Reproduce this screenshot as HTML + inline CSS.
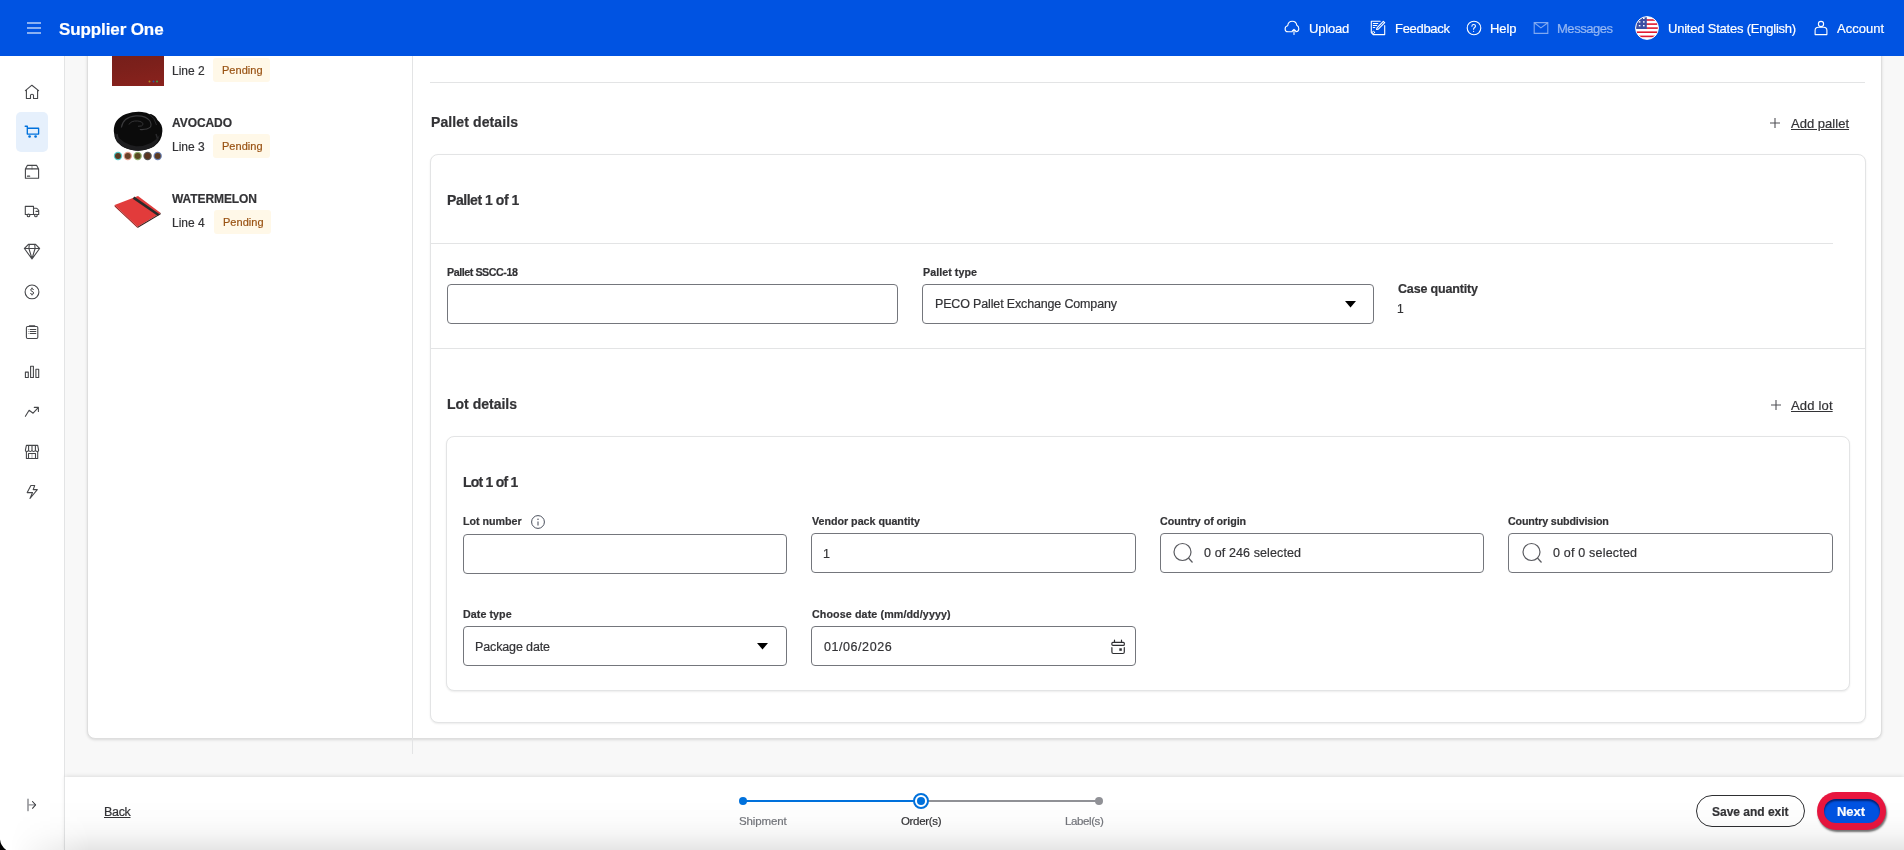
<!DOCTYPE html>
<html><head><meta charset="utf-8">
<style>
*{box-sizing:border-box;margin:0;padding:0}
html,body{width:1904px;height:850px;overflow:hidden;background:#f8f8f8;font-family:"Liberation Sans",sans-serif;color:#2e2f32;position:relative}
.abs{position:absolute}
.t{position:absolute;white-space:nowrap;line-height:1;-webkit-text-stroke:0.2px currentColor;will-change:transform}
svg{position:absolute;overflow:visible}

</style></head>
<body>
<div class="abs " style="left:87px;top:20px;width:1795px;height:719px;background:#fff;border:1px solid #dedede;border-radius:8px;box-shadow:0 1px 3px rgba(0,0,0,.13);"></div>
<div class="abs " style="left:412px;top:56px;width:1px;height:698px;background:#e3e4e5;"></div>
<div class="abs " style="left:112px;top:34px;width:52px;height:52px;background:linear-gradient(170deg,#6e1d19,#7c201b 60%,#8a221d);"></div>
<svg style="left:148px;top:80px" width="12" height="3"><circle cx="1.5" cy="1.5" r="1" fill="#b08a20"/><circle cx="5.5" cy="1.5" r="1" fill="#3050a0"/><circle cx="9" cy="1.5" r="1" fill="#40a040"/></svg>
<div class="t" style="left:172.00px;top:64.64px;font-size:12px;color:#333336;">Line 2</div>
<div class="abs " style="left:213px;top:58px;width:57px;height:24px;background:#fff8e8;border-radius:3px;"></div>
<div class="t" style="left:221.70px;top:64.89px;font-size:11px;color:#995213;letter-spacing:0.038px;">Pending</div>
<svg style="left:112px;top:110px" width="52" height="52" viewBox="0 0 52 52">
<path d="M1.8 21 Q1.5 9 14 4 Q22 1.3 30 2 Q35 2.5 37.6 4.3 L39 3.9 Q44 6 45.5 10 Q50.5 14 50.4 21 Q50 31 42 36.5 Q34 41 25 40.6 Q12 40 5 32 Q1.8 27 1.8 21Z" fill="#0b0b0b"/>
<path d="M3 23 Q10 34 24 36.2 Q40 36.5 47.5 25 Q47 33 40 37.5 Q31 41.5 22 40.5 Q9 38.5 3.5 29Z" fill="#1d1d1f"/>
<path d="M9.4 17.5 Q11 7 24 5.9 Q34 5.5 37.8 10.8 Q40 15 38.3 17.2 Q35 20 27.8 19.5" fill="none" stroke="#3a3a3c" stroke-width="1.1"/>
<path d="M17 14.5 Q19 10.5 25.6 11 Q31 11.5 31 14.5 Q30.5 16.5 26 16.3" fill="none" stroke="#343436" stroke-width="1"/>
<path d="M37.6 4.3 Q43 8 44.5 15" fill="none" stroke="#2a2a2c" stroke-width="1"/>
<path d="M5 24 L6 29 M44 24 L45.5 28.5" stroke="#2a2a2c" stroke-width="1.4"/>
<circle cx="6" cy="46" r="4.2" fill="#58c8c8"/><circle cx="6" cy="46" r="3" fill="#5a3a22"/>
<circle cx="15.8" cy="46" r="4.2" fill="#e0a090"/><circle cx="15.8" cy="46" r="3" fill="#6a4028"/>
<circle cx="25.7" cy="46" r="4.2" fill="#90b070"/><circle cx="25.7" cy="46" r="3" fill="#5a4a22"/>
<circle cx="35.6" cy="46" r="4.2" fill="#555"/><circle cx="35.6" cy="46" r="3" fill="#5a3520"/>
<circle cx="45.7" cy="46" r="4.2" fill="#6a80b0"/><circle cx="45.7" cy="46" r="3" fill="#5a3a22"/>
</svg>
<div class="t" style="left:172.00px;top:117.14px;font-size:12px;font-weight:bold;color:#333336;letter-spacing:-0.074px;">AVOCADO</div>
<div class="t" style="left:172.00px;top:140.54px;font-size:12px;color:#333336;">Line 3</div>
<div class="abs " style="left:213px;top:134px;width:57px;height:24px;background:#fff8e8;border-radius:3px;"></div>
<div class="t" style="left:221.70px;top:140.89px;font-size:11px;color:#995213;letter-spacing:0.038px;">Pending</div>
<svg style="left:112px;top:186px" width="52" height="52" viewBox="0 0 52 52">
<path d="M2.6 19 L26 10 L48.7 27 L25.6 40.8 Z" fill="#e23b3b"/>
<path d="M2.6 19 L25.6 40.8 L25.6 42 L2.6 20.5 Z" fill="#9a1e1a"/>
<path d="M25.6 40.8 L48.7 27 L48.7 28.2 L25.6 42Z" fill="#3a1a18"/>
<path d="M21.5 11.6 L46.6 29" stroke="#2a2a2a" stroke-width="2.6"/>
</svg>
<div class="t" style="left:172.00px;top:193.24px;font-size:12px;font-weight:bold;color:#333336;letter-spacing:-0.086px;">WATERMELON</div>
<div class="t" style="left:172.00px;top:216.54px;font-size:12px;color:#333336;">Line 4</div>
<div class="abs " style="left:214px;top:210px;width:57px;height:24px;background:#fff8e8;border-radius:3px;"></div>
<div class="t" style="left:222.60px;top:216.89px;font-size:11px;color:#995213;letter-spacing:0.038px;">Pending</div>
<div class="abs " style="left:430px;top:82px;width:1435px;height:1px;background:#e3e4e5;"></div>
<div class="t" style="left:431.00px;top:114.95px;font-size:14px;font-weight:bold;color:#333336;letter-spacing:0.108px;">Pallet details</div>
<svg style="left:1770px;top:118px" width="10" height="10" viewBox="0 0 10 10"><path d="M5 0V10M0 5H10" stroke="#505156" stroke-width="1.1"/></svg>
<div class="t" style="left:1790.50px;top:116.50px;font-size:13px;color:#333336;letter-spacing:0.020px;text-decoration:underline;text-underline-offset:1px;">Add pallet</div>
<div class="abs " style="left:430px;top:154px;width:1436px;height:569px;background:#fff;border:1px solid #e3e4e5;border-radius:8px;box-shadow:0 1px 2px rgba(0,0,0,.08);"></div>
<div class="t" style="left:447.00px;top:193.05px;font-size:14px;font-weight:bold;color:#333336;letter-spacing:-0.451px;">Pallet 1 of 1</div>
<div class="abs " style="left:431px;top:243px;width:1402px;height:1px;background:#e3e4e5;"></div>
<div class="t" style="left:447.00px;top:266.94px;font-size:10.7px;font-weight:bold;color:#333336;letter-spacing:-0.440px;">Pallet SSCC-18</div>
<div class="abs " style="left:447px;top:284px;width:451px;height:40px;border:1px solid #74767c;border-radius:4px;background:#fff;"></div>
<div class="t" style="left:922.80px;top:266.94px;font-size:10.7px;font-weight:bold;color:#333336;letter-spacing:0.048px;">Pallet type</div>
<div class="abs " style="left:922px;top:284px;width:452px;height:40px;border:1px solid #74767c;border-radius:4px;background:#fff;"></div>
<div class="t" style="left:935.00px;top:298.42px;font-size:12.5px;color:#333336;letter-spacing:-0.156px;">PECO Pallet Exchange Company</div>
<svg style="left:1344.5px;top:300.5px" width="11" height="6.5" viewBox="0 0 11 6.5"><path d="M0 0H11L5.5 6.5Z" fill="#000"/></svg>
<div class="t" style="left:1397.70px;top:283.22px;font-size:12.5px;font-weight:bold;color:#333336;letter-spacing:-0.164px;">Case quantity</div>
<div class="t" style="left:1397.00px;top:302.54px;font-size:12px;color:#333336;">1</div>
<div class="abs " style="left:431px;top:348px;width:1434px;height:1px;background:#e3e4e5;"></div>
<div class="t" style="left:447.00px;top:397.15px;font-size:14px;font-weight:bold;color:#333336;letter-spacing:-0.001px;">Lot details</div>
<svg style="left:1771px;top:400px" width="10" height="10" viewBox="0 0 10 10"><path d="M5 0V10M0 5H10" stroke="#505156" stroke-width="1.1"/></svg>
<div class="t" style="left:1791.40px;top:398.50px;font-size:13px;color:#333336;letter-spacing:0.171px;text-decoration:underline;text-underline-offset:1px;">Add lot</div>
<div class="abs " style="left:446px;top:436px;width:1404px;height:255px;background:#fff;border:1px solid #e3e4e5;border-radius:8px;box-shadow:0 1px 2px rgba(0,0,0,.08);"></div>
<div class="t" style="left:463.00px;top:474.95px;font-size:14px;font-weight:bold;color:#333336;letter-spacing:-0.769px;">Lot 1 of 1</div>
<div class="t" style="left:462.60px;top:516.44px;font-size:10.7px;font-weight:bold;color:#333336;letter-spacing:-0.016px;">Lot number</div>
<svg style="left:531px;top:515px" width="14" height="14" viewBox="0 0 14 14"><circle cx="7" cy="7" r="6.4" fill="none" stroke="#4a4f5c" stroke-width="1"/><circle cx="7" cy="4.3" r="0.75" fill="#4a4f5c"/><path d="M7 6.4V10.5" stroke="#4a4f5c" stroke-width="1.05"/></svg>
<div class="abs " style="left:463px;top:534px;width:324px;height:40px;border:1px solid #74767c;border-radius:4px;background:#fff;"></div>
<div class="t" style="left:811.50px;top:516.44px;font-size:10.7px;font-weight:bold;color:#333336;letter-spacing:-0.011px;">Vendor pack quantity</div>
<div class="abs " style="left:811px;top:533px;width:325px;height:40px;border:1px solid #74767c;border-radius:4px;background:#fff;"></div>
<div class="t" style="left:823.00px;top:547.92px;font-size:12.5px;color:#333336;">1</div>
<div class="t" style="left:1160.00px;top:516.24px;font-size:10.7px;font-weight:bold;color:#333336;letter-spacing:-0.036px;">Country of origin</div>
<div class="abs " style="left:1160px;top:533px;width:324px;height:40px;border:1px solid #74767c;border-radius:4px;background:#fff;"></div>
<svg style="left:1173px;top:543px" width="21" height="20" viewBox="0 0 21 20"><circle cx="9.5" cy="9" r="8.5" fill="none" stroke="#5a5b60" stroke-width="1.2"/><path d="M15.5 15L19.5 19.5" stroke="#5a5b60" stroke-width="1.2"/></svg>
<div class="t" style="left:1204.30px;top:547.42px;font-size:12.5px;color:#333336;letter-spacing:0.112px;">0 of 246 selected</div>
<div class="t" style="left:1508.40px;top:516.24px;font-size:10.7px;font-weight:bold;color:#333336;letter-spacing:-0.135px;">Country subdivision</div>
<div class="abs " style="left:1508px;top:533px;width:325px;height:40px;border:1px solid #74767c;border-radius:4px;background:#fff;"></div>
<svg style="left:1521.5px;top:543px" width="21" height="20" viewBox="0 0 21 20"><circle cx="9.5" cy="9" r="8.5" fill="none" stroke="#5a5b60" stroke-width="1.2"/><path d="M15.5 15L19.5 19.5" stroke="#5a5b60" stroke-width="1.2"/></svg>
<div class="t" style="left:1552.80px;top:547.42px;font-size:12.5px;color:#333336;letter-spacing:0.192px;">0 of 0 selected</div>
<div class="t" style="left:462.60px;top:609.44px;font-size:10.7px;font-weight:bold;color:#333336;letter-spacing:0.067px;">Date type</div>
<div class="abs " style="left:463px;top:626px;width:324px;height:40px;border:1px solid #74767c;border-radius:4px;background:#fff;"></div>
<div class="t" style="left:474.90px;top:640.62px;font-size:12.5px;color:#333336;letter-spacing:-0.132px;">Package date</div>
<svg style="left:757px;top:642.8px" width="11" height="6.5" viewBox="0 0 11 6.5"><path d="M0 0H11L5.5 6.5Z" fill="#000"/></svg>
<div class="t" style="left:811.50px;top:609.44px;font-size:10.7px;font-weight:bold;color:#333336;letter-spacing:0.115px;">Choose date (mm/dd/yyyy)</div>
<div class="abs " style="left:811px;top:626px;width:325px;height:40px;border:1px solid #74767c;border-radius:4px;background:#fff;"></div>
<div class="t" style="left:823.50px;top:640.62px;font-size:12.5px;color:#333336;letter-spacing:0.560px;">01/06/2026</div>
<svg style="left:1110px;top:639px" width="16" height="16" viewBox="0 0 16 16" fill="none" stroke="#2e2f32" stroke-width="1.2"><rect x="1.9" y="3.3" width="12.4" height="3.1" rx="1"/><path d="M4.5 1.2V3.4M11.5 1.2V3.4" stroke-linecap="round"/><path d="M1.9 8.7V13Q1.9 14.5 3.3 14.5H12.9Q14.3 14.5 14.3 13V8.7" stroke-linecap="round"/><rect x="9.3" y="9.3" width="2.5" height="2.5" fill="#2e2f32" stroke="none"/></svg>
<div class="abs " style="left:0px;top:56px;width:65px;height:794px;background:#fff;border-right:1px solid #e3e4e5;"></div>
<div class="abs " style="left:16px;top:112px;width:32px;height:40px;background:#e6f0fc;border-radius:5px;"></div>
<svg style="left:22px;top:82px" width="20" height="20" viewBox="0 0 20 20" fill="none" stroke="#46474a" stroke-width="1.1" stroke-linecap="round" stroke-linejoin="round"><path d="M3.4 8.6L9.9 3.2L16.6 8.6 M4.4 7.9V16.5H8.5V13.3Q8.5 12.2 10 12.2Q11.5 12.2 11.5 13.3V16.5H15.6V7.9"/></svg>
<svg style="left:22px;top:122px" width="20" height="20" viewBox="0 0 20 20" fill="none" stroke="#46474a" stroke-width="1.1" stroke-linecap="round" stroke-linejoin="round"><path d="M3.2 4.2H5.3V12.1H16.6V6.2H5.3" stroke="#0071dc" stroke-width="1.35"/><circle cx="7.6" cy="14.5" r="1.35" fill="#0071dc" stroke="none"/><circle cx="13.6" cy="14.5" r="1.35" fill="#0071dc" stroke="none"/></svg>
<svg style="left:22px;top:162px" width="20" height="20" viewBox="0 0 20 20" fill="none" stroke="#46474a" stroke-width="1.1" stroke-linecap="round" stroke-linejoin="round"><path d="M5.3 3.4H14.7L16.6 6.9V16.3H3.4V6.9Z M3.4 6.9H16.6"/><path d="M10 3.4V6.9" stroke-opacity=".5"/><path d="M5.5 14.2H7.6" stroke-width="1.3"/></svg>
<svg style="left:22px;top:202px" width="20" height="20" viewBox="0 0 20 20" fill="none" stroke="#46474a" stroke-width="1.1" stroke-linecap="round" stroke-linejoin="round"><path d="M3.3 4.4H11.5V12.5H3.3Z M11.5 6.2H14.4Q15.5 6.4 16.7 8.5V12.5H11.5 M14 9.4H16.7"/><circle cx="6.5" cy="13.4" r="1.3" fill="#fff"/><circle cx="13.9" cy="13.5" r="1.3" fill="#fff"/></svg>
<svg style="left:22px;top:242px" width="20" height="20" viewBox="0 0 20 20" fill="none" stroke="#46474a" stroke-width="1.1" stroke-linecap="round" stroke-linejoin="round"><path d="M6.4 2.4H13.6L17.6 6.5L10 17L2.4 6.5Z M2.4 6.5H17.6 M7.3 2.4L6.9 6.5L10 16.6 M12.7 2.4L13.1 6.5L10 16.6"/></svg>
<svg style="left:22px;top:282px" width="20" height="20" viewBox="0 0 20 20" fill="none" stroke="#46474a" stroke-width="1.1" stroke-linecap="round" stroke-linejoin="round"><circle cx="10" cy="9.9" r="6.9"/><path d="M11.5 7.6Q11.2 6.7 10 6.7Q8.7 6.7 8.7 7.9Q8.7 8.9 10 9.3Q11.6 9.8 11.6 11Q11.6 12.3 10 12.3Q8.8 12.3 8.5 11.4 M10 6V6.7 M10 12.3V13" stroke-width=".95"/></svg>
<svg style="left:22px;top:322px" width="20" height="20" viewBox="0 0 20 20" fill="none" stroke="#46474a" stroke-width="1.1" stroke-linecap="round" stroke-linejoin="round"><rect x="4.4" y="4.5" width="11.4" height="12" rx="1.2"/><path d="M7.4 3.9H12.7" stroke-width="1.3"/><path d="M8.1 7.5H13.8 M8.1 9.5H13.8 M8.1 11.5H13.8"/><path d="M6.4 7.5H6.45 M6.4 9.5H6.45 M6.4 11.5H6.45" stroke-opacity=".5"/></svg>
<svg style="left:22px;top:362px" width="20" height="20" viewBox="0 0 20 20" fill="none" stroke="#46474a" stroke-width="1.1" stroke-linecap="round" stroke-linejoin="round"><path d="M3.4 10.1H6.3V15.5H3.4Z M8.6 4.3H11.4V15.5H8.6Z M13.9 7.3H16.7V15.5H13.9Z"/></svg>
<svg style="left:22px;top:402px" width="20" height="20" viewBox="0 0 20 20" fill="none" stroke="#46474a" stroke-width="1.1" stroke-linecap="round" stroke-linejoin="round"><path d="M3.4 14.3L7.1 8.3L11.1 11.2L16.2 5.7 M12.3 5.4H16.4V9.5"/></svg>
<svg style="left:22px;top:442px" width="20" height="20" viewBox="0 0 20 20" fill="none" stroke="#46474a" stroke-width="1.1" stroke-linecap="round" stroke-linejoin="round"><path d="M4.4 3.4H15.7L16.6 8.2Q16.6 9.5 15.3 9.5Q13.9 9.5 13.4 8.2Q13 9.5 11.6 9.5Q10.2 9.5 10 8.2Q9.6 9.5 8.3 9.5Q6.9 9.5 6.6 8.2Q6.1 9.5 4.8 9.5Q3.4 9.5 3.4 8.2Z M6.6 3.4V8.2 M10 3.4V8.2 M13.4 3.4V8.2 M4.4 9.5V16.5H15.7V9.5 M6.5 16.5V11.5H13.5V16.5"/><path d="M10 11.5V16.5" stroke-opacity=".4"/></svg>
<svg style="left:22px;top:482px" width="20" height="20" viewBox="0 0 20 20" fill="none" stroke="#46474a" stroke-width="1.1" stroke-linecap="round" stroke-linejoin="round"><path d="M8.9 3.5H12.7L11.2 7.6H15.3L8 16.5L10.5 10.6H5.2Z"/></svg>
<svg style="left:22px;top:795px" width="20" height="20" viewBox="0 0 20 20" fill="none" stroke-linecap="round" stroke-linejoin="round"><path d="M6 4.4V15.4" stroke="#9a9b9f" stroke-width="1.7"/><path d="M6.8 9.9H13.2" stroke="#8e8f94" stroke-width="1.4"/><path d="M10.5 6.5L13.6 9.9L10.5 13.3" stroke="#3a3b3f" stroke-width="1.05"/></svg>
<div class="abs " style="left:0px;top:0px;width:1904px;height:56px;background:#0053e2;"></div>
<svg style="left:27px;top:22px" width="14" height="12" viewBox="0 0 14 12" fill="none" stroke-linecap="round" stroke-linejoin="round"><path d="M0 1H14M0 6H14M0 11H14" stroke="rgba(255,255,255,.72)" stroke-width="1.4" stroke-linecap="butt"/></svg>
<div class="t" style="left:59.30px;top:20.61px;font-size:17px;font-weight:bold;color:#fff;letter-spacing:-0.109px;">Supplier One</div>
<svg style="left:1280px;top:16px" width="24" height="24" viewBox="0 0 24 24" fill="none" stroke="#fff" stroke-width="1.1" stroke-linecap="round" stroke-linejoin="round"><path d="M12.2 15.8H7.9Q5.1 15.8 5.1 12.9Q5.1 10.3 7.7 9.8Q8.2 5.3 12.3 5.3Q16.2 5.3 16.8 9.3Q18.8 10.2 18.8 12.8Q18.8 15.6 16 15.8H15.8 M14 18.4V13.4 M12.3 15L14 13.3L15.7 15"/></svg>
<div class="t" style="left:1308.70px;top:22.00px;font-size:13px;color:#fff;letter-spacing:-0.180px;">Upload</div>
<svg style="left:1366px;top:16px" width="24" height="24" viewBox="0 0 24 24" fill="none" stroke="#fff" stroke-width="1.1" stroke-linecap="round" stroke-linejoin="round"><path d="M14.2 5.3H5.3V16.6L7.2 18.6H18.7V9.6 M7.3 7.5H11.8 M7.3 9.5H10.8 M7.3 11.5H8.8"/><path d="M17.3 5.3L18.7 6.7L12.3 13.1L10.6 13.5L11 11.8Z"/><circle cx="7.5" cy="16.4" r="1.1" stroke-width=".9"/></svg>
<div class="t" style="left:1394.50px;top:22.00px;font-size:13px;color:#fff;letter-spacing:-0.299px;">Feedback</div>
<svg style="left:1462px;top:16px" width="24" height="24" viewBox="0 0 24 24" fill="none" stroke="#fff" stroke-width="1.1" stroke-linecap="round" stroke-linejoin="round"><circle cx="12" cy="12" r="6.8"/><path d="M9.9 10.2Q9.9 8.5 11.6 8.5Q13.5 8.5 13.5 10.1Q13.5 11.1 12.4 11.7Q11.6 12.1 11.6 13.3"/><circle cx="11.6" cy="15.3" r=".6" fill="#fff" stroke="none"/></svg>
<div class="t" style="left:1489.90px;top:22.00px;font-size:13px;color:#fff;letter-spacing:-0.112px;">Help</div>
<svg style="left:1529px;top:16px" width="24" height="24" viewBox="0 0 24 24" fill="none" stroke="rgba(255,255,255,.5)" stroke-width="1.1" stroke-linecap="round" stroke-linejoin="round"><path d="M5.2 6.6H18.8V17.4H5.2Z M5.5 7L11.9 11.9L18.5 7" stroke-linejoin="miter"/></svg>
<div class="t" style="left:1556.70px;top:22.00px;font-size:13px;color:rgba(255,255,255,.5);letter-spacing:-0.464px;">Messages</div>
<svg style="left:1635px;top:16px" width="24" height="24" viewBox="0 0 24 24">
<defs><clipPath id="fc"><circle cx="12" cy="12" r="11.3"/></clipPath></defs>
<g clip-path="url(#fc)"><rect width="24" height="24" fill="#fff"/>
<rect y="3.2" width="24" height="1.6" fill="#e0192f"/><rect y="7.3" width="24" height="1.6" fill="#e0192f"/><rect y="11.3" width="24" height="1.6" fill="#e0192f"/><rect y="15.4" width="24" height="1.6" fill="#e0192f"/><rect y="19.6" width="24" height="1.6" fill="#e0192f"/>
<rect x="0" y="0" width="11.8" height="13" fill="#3d4fa3"/>
<rect x="3.8" y="5.2" width="1.6" height="1.4" fill="#fff"/><rect x="8" y="5.2" width="1.6" height="1.4" fill="#fff"/><rect x="3.8" y="9" width="1.6" height="1.4" fill="#fff"/><rect x="8" y="9" width="1.6" height="1.4" fill="#fff"/><rect x="8" y="1.8" width="1.6" height="1.2" fill="#fff"/>
</g><circle cx="12" cy="12" r="11.4" fill="none" stroke="#fff" stroke-width="1"/></svg>
<div class="t" style="left:1667.60px;top:22.00px;font-size:13px;color:#fff;letter-spacing:-0.216px;">United States (English)</div>
<svg style="left:1809px;top:16px" width="24" height="24" viewBox="0 0 24 24" fill="none" stroke="#fff" stroke-width="1.1" stroke-linecap="round" stroke-linejoin="round"><circle cx="12" cy="8" r="2.6"/><path d="M6.1 18.6V14.5Q6.1 11.3 9.3 11.3H14.7Q17.9 11.3 17.9 14.5V18.6Z"/></svg>
<div class="t" style="left:1836.60px;top:22.00px;font-size:13px;color:#fff;letter-spacing:0.021px;">Account</div>
<div class="abs " style="left:65px;top:777px;width:1839px;height:73px;background:#fff;box-shadow:0 -1px 4px rgba(0,0,0,.11);"></div>
<div class="abs " style="left:64px;top:777px;width:1px;height:73px;background:#e3e4e5;"></div>
<div class="t" style="left:104.30px;top:805.62px;font-size:12.5px;color:#333336;letter-spacing:-0.330px;text-decoration:underline;text-underline-offset:1px;">Back</div>
<div class="abs " style="left:743px;top:800px;width:178px;height:2px;background:#0071dc;"></div>
<div class="abs " style="left:921px;top:800px;width:178px;height:2px;background:#909196;"></div>
<div class="abs " style="left:739px;top:797px;width:8px;height:8px;background:#0071dc;border-radius:50%;"></div>
<div class="abs " style="left:1095px;top:797px;width:8px;height:8px;background:#909196;border-radius:50%;"></div>
<div class="abs " style="left:913px;top:793px;width:16px;height:16px;background:#fff;border:2px solid #0071dc;border-radius:50%;"></div>
<div class="abs " style="left:917px;top:797px;width:8px;height:8px;background:#0071dc;border-radius:50%;"></div>
<div class="t" style="left:739.30px;top:815.77px;font-size:11.5px;color:#74767c;letter-spacing:-0.126px;">Shipment</div>
<div class="t" style="left:901.00px;top:815.77px;font-size:11.5px;color:#333336;letter-spacing:-0.330px;">Order(s)</div>
<div class="t" style="left:1064.50px;top:815.77px;font-size:11.5px;color:#74767c;letter-spacing:-0.393px;">Label(s)</div>
<div class="abs " style="left:1696px;top:795px;width:109px;height:32px;border:1px solid #2e2f32;border-radius:16px;background:#fff;"></div>
<div class="t" style="left:1712.00px;top:805.84px;font-size:12px;font-weight:bold;color:#333336;letter-spacing:-0.009px;">Save and exit</div>
<div class="abs " style="left:1817px;top:792px;width:69px;height:38px;background:#e8163f;border-radius:19px;box-shadow:1px 2px 2px rgba(0,0,0,.55);"></div>
<div class="abs " style="left:1824px;top:799px;width:56px;height:24px;background:#0053e2;border-radius:12px;box-shadow:inset 0 2px 2px rgba(0,0,40,.6);"></div>
<div class="t" style="left:1837.00px;top:805.00px;font-size:13px;font-weight:bold;color:#fff;letter-spacing:-0.060px;">Next</div>
<div class="abs " style="left:0px;top:800px;width:1904px;height:50px;background:linear-gradient(rgba(0,0,0,0) 0%,rgba(0,0,0,.012) 40%,rgba(0,0,0,.04) 70%,rgba(0,0,0,.1) 100%);-webkit-mask-image:linear-gradient(90deg,transparent 10px,#000 90px);mask-image:linear-gradient(90deg,transparent 10px,#000 90px);"></div>
<svg style="left:0;top:836px" width="14" height="14" viewBox="0 0 14 14"><path d="M0 3.5Q0.8 10 6.2 14H0Z" fill="#000"/></svg>
</body></html>
